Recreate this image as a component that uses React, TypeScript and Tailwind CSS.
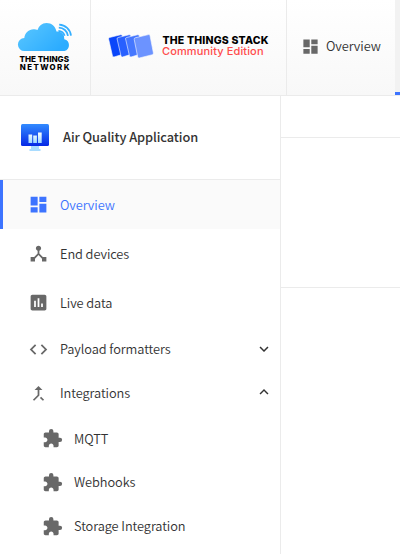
import type { ReactNode } from 'react'
import {
  MdCallMerge,
  MdCode,
  MdDashboard,
  MdDeviceHub,
  MdExpandLess,
  MdExpandMore,
  MdExtension,
  MdInsertChart,
} from 'react-icons/md'

function NetworkLogo() {
  return (
    <svg className="block h-[95px] w-[90px]" viewBox="0 0 90 95">
      <defs>
        <linearGradient id="cloud" x1="0" y1="0" x2="1" y2="0.6">
          <stop offset="0" stopColor="#5cc8ff" />
          <stop offset="1" stopColor="#2cacff" />
        </linearGradient>
      </defs>
      <path
        fill="url(#cloud)"
        d="M24.500 51a6.500 6.500 0 0 1-.2-13c.5-5.600 5-9.200 10-8.800 1.200 0 2.200.3 3.200.8A10 10 0 0 1 46.500 23c5 0 9 3.400 10 8.500a6.800 6.800 0 0 1 7.800 7.700A6.100 6.100 0 0 1 64.500 51z"
      />
      <g fill="none" stroke="#35afff" strokeWidth="1.800">
        <path d="M59.200 24.600a12.500 12.500 0 0 1 11.800 11" />
        <path d="M58.800 27.600a9.500 9.500 0 0 1 9.200 8.200" />
        <path d="M58.400 30.800a7 7 0 0 1 6.200 5" />
      </g>
      <g fill="#000" fontFamily="Inter, sans-serif" fontWeight="800">
        <text x="19.500" y="62" textLength="49.500" lengthAdjust="spacingAndGlyphs" fontSize="8">THE THINGS</text>
        <text x="19.700" y="69.700" textLength="49.800" fontSize="7.800">NETWORK</text>
      </g>
    </svg>
  )
}

function StackLogo() {
  return (
    <svg className="block h-[95px] w-[195px]" viewBox="91 0 195 95">
      <g stroke="#fcfcfc" strokeWidth=".6">
        <path fill="#0a46fa" d="M109.500 37.500l11-2.700q1.500-.2 1.800 1l3.700 17.500-12 3.700q-1.200.2-1.500-1l-3.900-17q-.2-1.200.9-1.500z" />
        <path fill="#2860ff" d="M118 37.500l11-2.700q1.500-.2 1.800 1l3.700 17.500-12 3.700q-1.200.2-1.500-1l-3.900-17q-.2-1.200.9-1.500z" />
        <path fill="#4577ff" d="M126.500 37.500l11-2.700q1.500-.2 1.800 1l3.700 17.500-12 3.700q-1.200.2-1.500-1l-3.900-17q-.2-1.200.9-1.500z" />
        <path fill="#6c93ff" d="M135.200 37.800l13.300-3.200q1.200-.2 1.500 1l3.400 17.400q.2 1.300-1 1.700l-13.200 3.300q-1.200.2-1.500-1l-3.500-17.600q-.2-1.300 1-1.600z" />
      </g>
      <text x="162.500" y="44" textLength="106" fill="#000" fontFamily="Inter, sans-serif" fontWeight="800" fontSize="10.500">
        THE THINGS STACK
      </text>
      <text x="162" y="55" textLength="101.500" fill="#ff4b4b" fontFamily="Inter, sans-serif" fontWeight="500" fontSize="11">
        Community Edition
      </text>
    </svg>
  )
}

function ApplicationIcon() {
  return (
    <svg className="block h-7 w-7" viewBox="0 0 28 28">
      <defs>
        <linearGradient id="screen" x1="0" y1="0" x2="0" y2="1">
          <stop offset="0" stopColor="#328bff" />
          <stop offset="1" stopColor="#0528e5" />
        </linearGradient>
        <linearGradient id="bars" x1="0" y1="0" x2="0" y2="1">
          <stop offset="0" stopColor="#fff" />
          <stop offset="1" stopColor="#9cd9ff" />
        </linearGradient>
      </defs>
      <path fill="#a9dcff" d="M10 22h8v3h1.500v2h-11v-2H10z" />
      <rect width="28" height="22" rx="1.500" fill="url(#screen)" />
      <path fill="url(#bars)" d="M7.500 10.500h3.700v8.500H7.500zM12.200 11.500h3.700V19h-3.700zM17 8.500h3.700V19H17z" />
    </svg>
  )
}

type RowProps = { icon: ReactNode; label: string; size: string; active?: boolean; nested?: boolean; arrow?: ReactNode }

function Row({ icon, label, size, active, nested, arrow }: RowProps) {
  return (
    <a
      className={`flex items-center border-l-[3px] pr-[7px] ${size} ${nested ? 'pl-[39px]' : 'pl-[25px]'} ${
        active ? 'border-[#3d74ff] bg-[#fafafa] text-[#3d74ff]' : 'border-transparent'
      }`}
    >
      <span className={`mr-[11px] w-[21px] text-[21px] ${active ? '' : 'text-[#686868]'}`}>{icon}</span>
      <span className="grow">{label}</span>
      {arrow}
    </a>
  )
}

export default function App() {
  return (
    <div className="flex h-[554px] w-[400px] flex-col overflow-hidden bg-white font-['Noto_Sans_CJK_SC',sans-serif] text-[12.8px] leading-5 font-[350] tracking-[-0.08px] text-[#333]">
      <header className="flex h-24 shrink-0 border-b border-[#ebebeb] bg-linear-to-b from-white to-[#f8f8f8]">
        <div className="w-[91px] shrink-0 border-r border-[#ebebeb] tracking-normal">
          <NetworkLogo />
        </div>
        <div className="w-[196px] shrink-0 border-r border-[#ebebeb] tracking-normal">
          <StackLogo />
        </div>
        <nav className="flex w-[108px] shrink-0 items-center pb-[3px] pl-[14px]">
          <MdDashboard className="mt-px mr-[6px] size-[19px] text-[#686868]" />
          <span>Overview</span>
        </nav>
        <div className="grow border-b-[3px] border-[#3d74ff] bg-[#f2f2f2]" />
      </header>
      <div className="flex grow">
        <aside className="w-[281px] shrink-0 border-r border-[#ebebeb]">
          <div className="flex h-[84px] items-center border-b border-[#ebebeb] pl-[21px] font-medium">
            <ApplicationIcon />
            <span className="ml-[14px] pb-0.5">Air Quality Application</span>
          </div>
          <nav>
            <Row icon={<MdDashboard />} label="Overview" size="h-[49px]" active />
            <Row icon={<MdDeviceHub />} label="End devices" size="h-[49px]" />
            <Row icon={<MdInsertChart />} label="Live data" size="h-[49px]" />
            <Row icon={<MdCode />} label="Payload formatters" size="h-11" arrow={<MdExpandMore className="size-[18px]" />} />
            <Row icon={<MdCallMerge />} label="Integrations" size="h-11" arrow={<MdExpandLess className="mb-0.5 size-[18px]" />} />
            <div className="pt-0.5">
              <Row icon={<MdExtension />} label="MQTT" size="h-[43px]" nested />
              <Row icon={<MdExtension />} label="Webhooks" size="h-11" nested />
              <Row icon={<MdExtension />} label="Storage Integration" size="h-11" nested />
            </div>
          </nav>
        </aside>
        <main className="grow">
          <div className="h-[42px] border-b border-[#ebebeb]" />
          <div className="h-[150px] border-b border-[#ebebeb]" />
        </main>
      </div>
    </div>
  )
}
